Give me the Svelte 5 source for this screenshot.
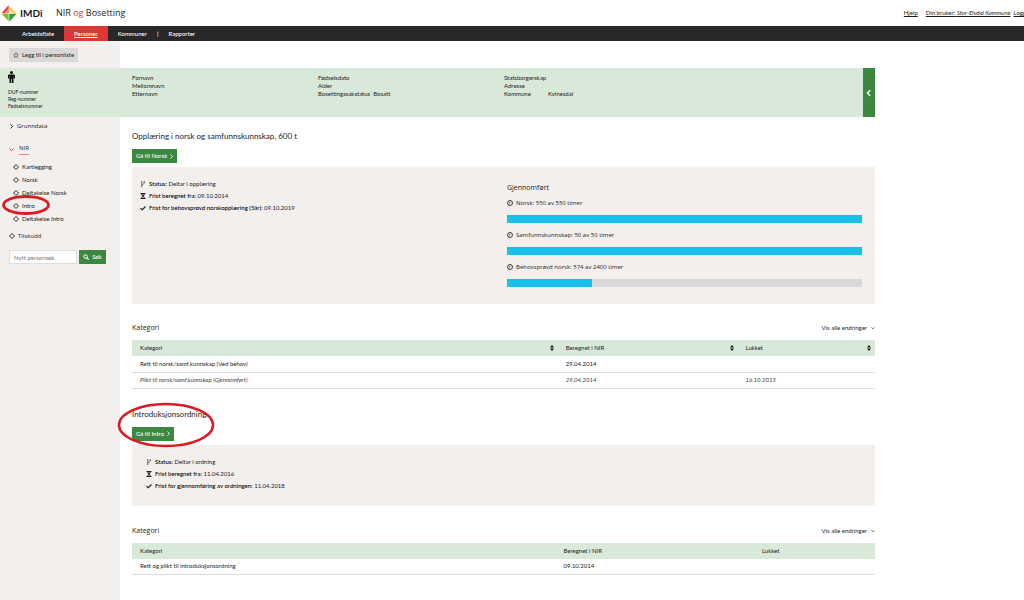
<script>
  const tabs = ['Arbeidsflate', 'Personer', 'Kommuner', 'Rapporter'];
  const links = ['Kartlegging', 'Norsk', 'Deltakelse Norsk', 'Intro', 'Deltakelse Intro'];
  const bars = [
    { label: 'Norsk', done: 550, total: 550, pct: 100 },
    { label: 'Samfunnskunnskap', done: 50, total: 50, pct: 100 },
    { label: 'Behovsprøvd norsk', done: 574, total: 2400, pct: 24 }
  ];
  const norsk = [
    ['branch', 'Status:', 'Deltar i opplæring'],
    ['hourglass', 'Frist beregnet fra:', '09.10.2014'],
    ['check', 'Frist for behovsprøvd norskopplæring (5år):', '09.10.2019']
  ];
  const intro = [
    ['branch', 'Status:', 'Deltar i ordning'],
    ['hourglass', 'Frist beregnet fra:', '11.04.2016'],
    ['check', 'Frist for gjennomføring av ordningen:', '11.04.2018']
  ];
</script>

{#snippet diamond()}
  <svg class="ico" viewBox="0 0 12 12" aria-hidden="true"><path d="M6 1 11 6 6 11 1 6Z" fill="none" stroke="#222" stroke-width="1.9" /></svg>
{/snippet}

{#snippet chevron(d)}
  <svg class="chev" viewBox="0 0 10 10" aria-hidden="true"><path {d} fill="none" stroke="currentColor" stroke-width="1.8" /></svg>
{/snippet}

{#snippet statusIcon(name)}
  <svg class="ico" viewBox="0 0 12 12" aria-hidden="true">
    {#if name === 'branch'}
      <path d="M3.5 3v7M8.5 3v1.5L3.5 8" fill="none" stroke="#222" stroke-width="1.2" />
      <circle cx="3.5" cy="1.8" r="1.3" fill="#222" /><circle cx="8.5" cy="1.8" r="1.3" fill="#222" /><circle cx="3.5" cy="10.5" r="1.2" fill="#222" />
    {:else if name === 'hourglass'}
      <path d="M1 0h10v2H1zM1 10h10v2H1zM2.5 2h7Q9.5 4.5 7 6 9.5 7.5 9.5 10h-7Q2.5 7.5 5 6 2.5 4.5 2.5 2Z" fill="#222" />
      <path d="M4 3h4M4.5 9 6 7.5 7.5 9Z" stroke="#f2efec" stroke-width=".8" fill="#f2efec" />
    {:else}
      <path d="M1 6.5 4.5 9.5 11 3" fill="none" stroke="#222" stroke-width="2.2" />
    {/if}
  </svg>
{/snippet}

{#snippet statusList(items)}
  <ul class="status">
    {#each items as [icon, label, value]}
      <li>{@render statusIcon(icon)}<span><b>{label}</b> {value}</span></li>
    {/each}
  </ul>
{/snippet}

{#snippet sorter()}
  <button class="sort" aria-label="Sorter"><svg viewBox="0 0 8 12" aria-hidden="true"><path d="M0 5 4 0l4 5zM0 7l4 5 4-5z" fill="#111" /></svg></button>
{/snippet}

{#snippet tableHead()}
  <div class="thead">
    <h3>Kategori</h3>
    <button class="all">Vis alle endringer {@render chevron('M1.5 3.5 5 7l3.5-3.5')}</button>
  </div>
{/snippet}

<div class="page">
  <header>
    <a class="brand" href="#hjem">
      <svg class="logo" viewBox="0 0 48 52" aria-hidden="true">
        <path d="M23 0v25H1Z" fill="#e2473f" /><path d="M25 2 46 25H25Z" fill="#f7d04a" />
        <path d="M1 27h22v23Z" fill="#7cbf3f" /><path d="M25 27h22L25 51Z" fill="#2f9a45" />
        <path d="M10 25 23 11v14Z" fill="#f39a80" /><path d="M25 14 36 25H25Z" fill="#fff3c0" />
      </svg>
      <strong>IMDi</strong>
    </a>
    <span class="title">NIR <em>og</em> Bosetting</span>
    <div class="user">
      <a href="#hjelp">Hjelp</a>
      <a href="#bruker">Din bruker: <i>Stor-Elvdal Kommune</i></a>
      <a class="out" href="#logg">Logg</a>
    </div>
  </header>

  <nav class="tabs">
    {#each tabs as tab, i}
      {#if i === 3}<span class="bar">|</span>{/if}
      <a href="#{tab}" class:active={i === 1}>{tab}</a>
    {/each}
  </nav>

  <div class="grid">
    <div class="tools">
      <button class="fav">
        <svg viewBox="0 0 12 12" aria-hidden="true"><path d="M6 1 7.5 4.5 11 4.8 8.4 7.2 9.2 10.8 6 8.9 2.8 10.8 3.6 7.2 1 4.8 4.5 4.5Z" fill="none" stroke="#333" stroke-width="1" /></svg>
        Legg til i personliste
      </button>
    </div>

    <section class="banner">
      <div class="ids">
        <svg viewBox="0 0 14 24" aria-hidden="true"><circle cx="7" cy="3" r="3" fill="#111" /><path d="M2 7h10q2 0 2 2v6h-2.5v-5H11v14H7.7v-8H6.3v8H3V10h-.5v5H0V9q0-2 2-2Z" fill="#111" /></svg>
        <span>DUF-nummer</span><span>Reg-nummer</span><span>Fødselsnummer</span>
      </div>
      <div class="facts"><span>Fornavn</span><span>Mellomnavn</span><span>Etternavn</span></div>
      <div class="facts"><span>Fødselsdato</span><span>Alder</span><span>Bosettingssakstatus &nbsp;Bosatt</span></div>
      <div class="facts"><span>Statsborgerskap</span><span>Adresse</span><span class="pair"><span>Kommune</span><span>Kvinesdal</span></span></div>
      <button class="fold" aria-label="Vis mer">{@render chevron('M6.5 1.5 3 5l3.5 3.5')}</button>
    </section>

    <aside>
      <a class="top" href="#grunndata">{@render chevron('M3 1l4 4-4 4')}Grunndata</a>
      <a class="top nir" href="#nir">{@render chevron('M1 3l4 4 4-4')}<span>NIR</span></a>
      <ul>
        {#each links as link}
          <li><a href="#{link}">{@render diamond()}{link}</a>
            {#if link === 'Intro'}
              <svg class="ring small" viewBox="0 0 48 20" aria-hidden="true"><ellipse cx="24" cy="10" rx="22.5" ry="8.5" fill="none" stroke="#dc1a22" stroke-width="2.8" /></svg>
            {/if}
          </li>
        {/each}
      </ul>
      <a class="top" href="#tilskudd">{@render diamond()}Tilskudd</a>
      <form onsubmit={(e) => e.preventDefault()}>
        <input type="text" aria-label="Nytt personsøk" placeholder="Nytt personsøk" />
        <button><svg viewBox="0 0 12 12" aria-hidden="true"><circle cx="5" cy="5" r="3.5" fill="none" stroke="#fff" stroke-width="2" /><path d="m7.5 7.5 4 4" stroke="#fff" stroke-width="2.2" /></svg>Søk</button>
      </form>
    </aside>

    <main>
      <h2>Opplæring i norsk og samfunnskunnskap, 600 t</h2>
      <button class="go">Gå til Norsk {@render chevron('M3 1l4 4-4 4')}</button>
      <div class="panel tall">
        {@render statusList(norsk)}
        <div class="progress">
          <h3>Gjennomført</h3>
          {#each bars as bar}
            <p><svg class="ico" viewBox="0 0 12 12" aria-hidden="true"><circle cx="6" cy="6" r="5" fill="none" stroke="#222" stroke-width="1.7" /><path d="M6 3v3.5H3.5" fill="none" stroke="#222" stroke-width="1" /></svg>{bar.label}: {bar.done} av {bar.total} timer</p>
            <div class="track"><div style="width: {bar.pct}%"></div></div>
          {/each}
        </div>
      </div>

      {@render tableHead()}
      <table>
        <colgroup><col class="a" /><col class="b" /><col /></colgroup>
        <thead><tr><th><div>Kategori{@render sorter()}</div></th><th><div>Beregnet i NIR{@render sorter()}</div></th><th><div>Lukket{@render sorter()}</div></th></tr></thead>
        <tbody>
          <tr><td>Rett til norsk/samf.kunnskap (Ved behov)</td><td>29.04.2014</td><td></td></tr>
          <tr class="closed"><td>Plikt til norsk/samf.kunnskap (Gjennomført)</td><td>29.04.2014</td><td>16.10.2015</td></tr>
        </tbody>
      </table>

      <div class="intro">
        <h2>Introduksjonsordning</h2>
        <button class="go">Gå til Intro {@render chevron('M3 1l4 4-4 4')}</button>
        <svg class="ring big" viewBox="0 0 98 46" aria-hidden="true"><ellipse cx="49" cy="23" rx="47" ry="21" fill="none" stroke="#dc1a22" stroke-width="2.5" /></svg>
      </div>
      <div class="panel short">{@render statusList(intro)}</div>

      {@render tableHead()}
      <table>
        <colgroup><col class="c" /><col class="d" /><col /></colgroup>
        <thead><tr><th>Kategori</th><th>Beregnet i NIR</th><th>Lukket</th></tr></thead>
        <tbody><tr><td>Rett og plikt til introduksjonsordning</td><td>09.10.2014</td><td></td></tr></tbody>
      </table>
    </main>
  </div>
</div>

<style>
  :global(body) { margin: 0; background: #fff; }
  .page { min-height: 100vh; display: flex; flex-direction: column; font: 6px/8px Lato, "Open Sans", sans-serif; font-variant-ligatures: none; color: #1c1c1c; overflow: hidden; }
  * { box-sizing: border-box; }
  button, input { font: inherit; font-variant-ligatures: none; color: inherit; border: 0; border-radius: 0; padding: 0; margin: 0; background: none; }
  a { color: inherit; text-decoration: none; }
  ul { list-style: none; margin: 0; padding: 0; }
  h2, h3, p { margin: 0; font-weight: 400; }
  svg { display: block; flex: none; }
  .ico { width: 6px; height: 6px; }
  .chev { width: 5px; height: 5px; }
  .title, .top, h3, .progress { font-family: "Open Sans", "Noto Sans", sans-serif; }

  header { height: 26px; display: flex; align-items: center; white-space: nowrap; }
  .brand { display: flex; align-items: center; gap: 3px; margin-left: 1px; width: 55px; color: #1c1c1c; font-size: 10px; }
  .logo { width: 16px; height: 17px; }
  .title { font-size: 9px; }
  .title em { font-style: normal; color: #dc3c3c; }
  .user { display: flex; margin-left: auto; margin-right: -2px; }
  .user a { text-decoration: underline; margin-left: 8px; }
  .user .out { margin-left: 3px; }

  .tabs { height: 15px; background: #282828; color: #fff; display: flex; align-items: stretch; padding-left: 12px; font-weight: 500; line-height: 15px; }
  .tabs a { padding: 0 10px; }
  .tabs .active { background: #de3836; text-decoration: underline; }

  .grid { flex: 1; display: grid; grid-template-columns: 120px minmax(0, 1fr); grid-template-rows: 27px 49px 1fr; padding-right: 149px; }
  .tools { background: #f2efec; padding: 7px 9px; }
  .fav { height: 14px; padding: 0 4px; display: flex; align-items: center; gap: 3px; background: #dbd9d7; }
  .fav svg { width: 6px; height: 6px; }

  .banner { grid-column: 1 / -1; background: #d8e8d9; display: grid; grid-template-columns: 132px 186fr 186fr 359fr 12px; }
  .ids { padding: 3px 8px; font-size: 5px; line-height: 7px; }
  .ids svg { width: 7px; height: 12px; margin-bottom: 6px; }
  .ids span, .facts > span { display: block; }
  .facts { padding-top: 6px; }
  .facts .pair { display: grid; grid-template-columns: 44px 1fr; }
  .fold { background: #3c8840; color: #fff; display: grid; place-items: center; }
  .fold .chev { width: 8px; height: 8px; }

  aside { background: #f2efec; padding: 5px 14px 5px 9px; }
  .top { display: flex; align-items: center; gap: 3px; height: 8px; }
  .nir { margin: 15px 0 7px; color: #c33; }
  .nir span { color: #2b2b2b; border-bottom: 1px solid #e88; line-height: 11px; margin-left: 2px; }
  aside ul { padding-left: 4px; margin-bottom: 7px; }
  aside li { position: relative; line-height: 13px; }
  aside li a { display: flex; align-items: center; gap: 3px; }
  .ring { position: absolute; pointer-events: none; }
  .small { left: -11px; top: -4px; width: 48px; height: 20px; }
  form { display: flex; gap: 2px; margin-top: 10px; }
  input { flex: 1; min-width: 0; height: 14px; border: 1px solid #ddd; background: #fff; padding: 0 4px; }
  input::placeholder { color: #777; }
  form button { width: 27px; background: #3c8840; color: #fff; font-weight: 500; display: flex; align-items: center; justify-content: center; gap: 3px; }
  form svg { width: 6px; height: 6px; }

  main { padding: 13px 0 0 12px; }
  h2 { font-size: 8px; line-height: 12px; }
  h3 { font-size: 7px; line-height: 10px; }
  .go { height: 14px; padding: 0 3px 0 4px; margin-top: 7px; background: #3c8840; color: #fff; font-weight: 500; display: flex; align-items: center; gap: 2px; }
  .panel { background: #f2efec; margin-top: 4px; display: grid; grid-template-columns: 375px 1fr; }
  .tall { padding: 11px 13px 17px 0; margin-bottom: 19px; }
  .short { padding: 11px 0 14px 6px; margin-bottom: 20px; }
  .status { padding-left: 8px; line-height: 12px; }
  .status li { display: flex; align-items: center; gap: 3px; }
  .status b { font-weight: 500; color: #000; }
  .progress h3 { margin: 5px 0 6px; }
  .progress p { display: flex; align-items: center; gap: 3px; margin-bottom: 8px; }
  .track { height: 8px; margin-bottom: 8px; background: #d9d9d9; }
  .track div { height: 100%; background: #17c1e8; }
  .track:last-child { margin-bottom: 0; }

  .thead { display: flex; justify-content: space-between; align-items: center; margin-bottom: 7px; }
  .all { display: flex; align-items: center; gap: 4px; }
  .all .chev { width: 4px; height: 4px; }
  table { width: 100%; border-collapse: collapse; table-layout: fixed; }
  .a { width: 57.3%; }
  .b { width: 24.2%; }
  .c { width: 57%; }
  .d { width: 26.7%; }
  th, td { height: 16px; padding: 0 4px 0 8px; text-align: left; font-weight: 400; }
  td { border-bottom: 1px solid #ddd; }
  thead { background: #d8e8d9; }
  th div { display: flex; justify-content: space-between; align-items: center; }
  .sort svg { width: 4px; height: 6px; }
  .closed { font-style: italic; color: #444; }
  .intro { position: relative; margin-top: 19px; }
  .big { left: -15px; top: -6px; width: 98px; height: 46px; }
</style>
